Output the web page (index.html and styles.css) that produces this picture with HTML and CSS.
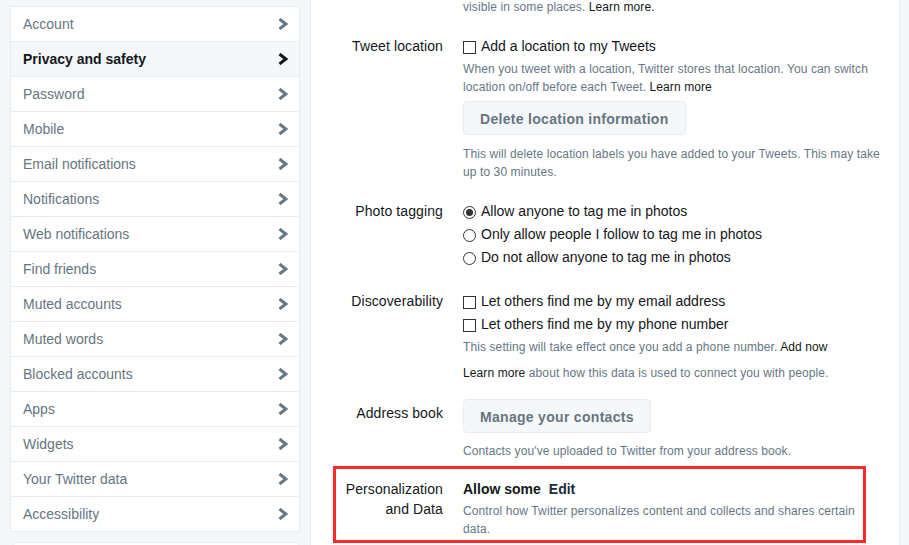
FILE: index.html
```html
<!DOCTYPE html>
<html lang="en">
<head>
<meta charset="utf-8">
<title>Privacy and safety</title>
<link rel="stylesheet" href="styles.css">
</head>
<body>
<div class="page">
  <aside class="sidebar">
    <ul class="nav">
      <li class="nav-item"><span>Account</span><svg class="chev" viewBox="0 0 10 12"><polyline points="1.5,1 7.8,6 1.5,11"/></svg></li>
      <li class="nav-item active"><span>Privacy and safety</span><svg class="chev" viewBox="0 0 10 12"><polyline points="1.5,1 7.8,6 1.5,11"/></svg></li>
      <li class="nav-item"><span>Password</span><svg class="chev" viewBox="0 0 10 12"><polyline points="1.5,1 7.8,6 1.5,11"/></svg></li>
      <li class="nav-item"><span>Mobile</span><svg class="chev" viewBox="0 0 10 12"><polyline points="1.5,1 7.8,6 1.5,11"/></svg></li>
      <li class="nav-item"><span>Email notifications</span><svg class="chev" viewBox="0 0 10 12"><polyline points="1.5,1 7.8,6 1.5,11"/></svg></li>
      <li class="nav-item"><span>Notifications</span><svg class="chev" viewBox="0 0 10 12"><polyline points="1.5,1 7.8,6 1.5,11"/></svg></li>
      <li class="nav-item"><span>Web notifications</span><svg class="chev" viewBox="0 0 10 12"><polyline points="1.5,1 7.8,6 1.5,11"/></svg></li>
      <li class="nav-item"><span>Find friends</span><svg class="chev" viewBox="0 0 10 12"><polyline points="1.5,1 7.8,6 1.5,11"/></svg></li>
      <li class="nav-item"><span>Muted accounts</span><svg class="chev" viewBox="0 0 10 12"><polyline points="1.5,1 7.8,6 1.5,11"/></svg></li>
      <li class="nav-item"><span>Muted words</span><svg class="chev" viewBox="0 0 10 12"><polyline points="1.5,1 7.8,6 1.5,11"/></svg></li>
      <li class="nav-item"><span>Blocked accounts</span><svg class="chev" viewBox="0 0 10 12"><polyline points="1.5,1 7.8,6 1.5,11"/></svg></li>
      <li class="nav-item"><span>Apps</span><svg class="chev" viewBox="0 0 10 12"><polyline points="1.5,1 7.8,6 1.5,11"/></svg></li>
      <li class="nav-item"><span>Widgets</span><svg class="chev" viewBox="0 0 10 12"><polyline points="1.5,1 7.8,6 1.5,11"/></svg></li>
      <li class="nav-item"><span>Your Twitter data</span><svg class="chev" viewBox="0 0 10 12"><polyline points="1.5,1 7.8,6 1.5,11"/></svg></li>
      <li class="nav-item"><span>Accessibility</span><svg class="chev" viewBox="0 0 10 12"><polyline points="1.5,1 7.8,6 1.5,11"/></svg></li>
    </ul>
    <div class="sidecard"></div>
  </aside>

  <main class="panel">
    <div class="row row-first">
      <div class="label"></div>
      <div class="field">
        <p class="desc">visible in some places. <a class="link">Learn more.</a></p>
      </div>
    </div>

    <div class="row row-tweet">
      <div class="label">Tweet location</div>
      <div class="field">
        <label class="option"><span class="box"></span>Add a location to my Tweets</label>
        <p class="desc desc-after-opt">When you tweet with a location, Twitter stores that location. You can switch location on/off before each Tweet. <a class="link">Learn more</a></p>
        <button class="btn btn-delete">Delete location information</button>
        <p class="desc desc-after-btn">This will delete location labels you have added to your Tweets. This may take up to 30 minutes.</p>
      </div>
    </div>

    <div class="row row-photo">
      <div class="label">Photo tagging</div>
      <div class="field">
        <label class="option"><span class="radio checked"></span>Allow anyone to tag me in photos</label>
        <label class="option"><span class="radio"></span>Only allow people I follow to tag me in photos</label>
        <label class="option"><span class="radio"></span>Do not allow anyone to tag me in photos</label>
      </div>
    </div>

    <div class="row row-discover">
      <div class="label">Discoverability</div>
      <div class="field">
        <label class="option"><span class="box"></span>Let others find me by my email address</label>
        <label class="option"><span class="box"></span>Let others find me by my phone number</label>
        <p class="desc desc-after-opt">This setting will take effect once you add a phone number. <a class="link">Add now</a></p>
        <p class="desc desc-learn"><a class="link">Learn more</a> about how this data is used to connect you with people.</p>
      </div>
    </div>

    <div class="row row-address">
      <div class="label label-btn">Address book</div>
      <div class="field">
        <button class="btn">Manage your contacts</button>
        <p class="desc desc-after-btn2">Contacts you've uploaded to Twitter from your address book.</p>
      </div>
    </div>

    <div class="row row-personal">
      <div class="label">Personalization<br>and Data</div>
      <div class="field">
        <div class="status"><strong>Allow some</strong><a class="edit">Edit</a></div>
        <p class="desc desc-status">Control how Twitter personalizes content and collects and shares certain data.</p>
      </div>
    </div>
  </main>
</div>
</body>
</html>
```

FILE: styles.css
```css
*, *::before, *::after { box-sizing: border-box; }

html, body {
  margin: 0;
  padding: 0;
  height: 100%;
  overflow: hidden;
}

body {
  background: #f5f8fa;
  font-family: "Liberation Sans", Arial, sans-serif;
  color: #14171a;
  font-size: 14px;
}

.page {
  display: flex;
  align-items: flex-start;
  padding-left: 10px;
  gap: 10px;
}

/* Sidebar */
.sidebar {
  width: 290px;
  flex: none;
  margin-top: 6px;
}

.nav {
  list-style: none;
  margin: 0;
  padding: 0;
  background: #fff;
  border: 1px solid #e6ecf0;
  border-bottom: 0;
}

.nav-item {
  display: flex;
  align-items: center;
  justify-content: space-between;
  height: 35px;
  padding: 0 11px 1px 12px;
  border-bottom: 1px solid #e6ecf0;
  color: #66757f;
  font-size: 14px;
  line-height: 34px;
}

.nav-item.active {
  background: #f5f8fa;
  color: #14171a;
  font-weight: bold;
}

.chev {
  width: 10px;
  height: 12px;
  margin-top: 1px;
  fill: none;
  stroke: #657786;
  stroke-width: 3;
  stroke-linecap: butt;
  stroke-linejoin: miter;
}

.nav-item.active .chev { stroke: #14171a; }

.sidecard {
  margin-top: 10px;
  margin-left: 2px;
  height: 60px;
  background: #fff;
  border: 1px solid #e6ecf0;
  border-radius: 5px;
}

/* Main panel */
.panel {
  width: 590px;
  flex: none;
  min-height: 560px;
  background: #fff;
  border-left: 1px solid #e6ecf0;
  border-right: 1px solid #e6ecf0;
}

.row {
  display: grid;
  grid-template-columns: 132px 420px;
  column-gap: 20px;
  position: relative;
}

.row-first { margin-top: -2px; }
.row-tweet { margin-top: 20px; }
.row-photo { margin-top: 20px; }
.row-discover { margin-top: 24px; }
.row-address { margin-top: 17px; }
.row-personal { margin-top: 19px; }

.row-personal::after {
  content: "";
  position: absolute;
  left: 22px;
  top: -13px;
  width: 533px;
  height: 77px;
  border: 3px solid #fb2a2a;
  pointer-events: none;
}

.label {
  text-align: right;
  font-size: 14px;
  line-height: 20px;
  letter-spacing: 0.1px;
  color: #14171a;
}

.label-btn { padding-top: 4px; }

.field { min-width: 0; }

.option {
  display: flex;
  align-items: center;
  height: 20px;
  margin-bottom: 3px;
  font-size: 14px;
  line-height: 20px;
  color: #14171a;
}

.option:last-of-type { margin-bottom: 0; }

.box {
  width: 13px;
  height: 13px;
  border: 1px solid #333;
  background: #fff;
  margin-right: 5px;
  flex: none;
  position: relative;
  top: 1px;
}

.radio {
  width: 13px;
  height: 13px;
  border: 1px solid #333;
  border-radius: 50%;
  background: #fff;
  margin-right: 5px;
  flex: none;
  position: relative;
  top: 1px;
  display: flex;
  align-items: center;
  justify-content: center;
}

.radio.checked::after {
  content: "";
  width: 7px;
  height: 7px;
  border-radius: 50%;
  background: #333;
}

.desc {
  margin: 0;
  font-size: 12px;
  line-height: 18px;
  letter-spacing: 0.1px;
  color: #657786;
}

.link, .edit {
  color: #14171a;
  text-decoration: none;
  cursor: pointer;
}

.desc-after-opt { margin-top: 4px; }
.desc-after-btn { margin-top: 10px; }
.desc-learn { margin-top: 8px; }
.desc-after-btn2 { margin-top: 9px; }
.desc-status { margin-top: 3px; }

.btn {
  display: block;
  margin-top: 5px;
  height: 34px;
  padding: 0 16px;
  background: #f5f8fa;
  border: 1px solid #e6ecf0;
  border-radius: 4px;
  font-family: "Liberation Sans", Arial, sans-serif;
  font-size: 14px;
  font-weight: bold;
  letter-spacing: 0.3px;
  line-height: 34px;
  color: #66757f;
}

.row-address .btn { margin-top: 0; }

.status {
  display: flex;
  gap: 8px;
  font-size: 14px;
  line-height: 20px;
  font-weight: bold;
}

.status strong { color: #14171a; }
.edit { color: #1c2b3a; }
```
